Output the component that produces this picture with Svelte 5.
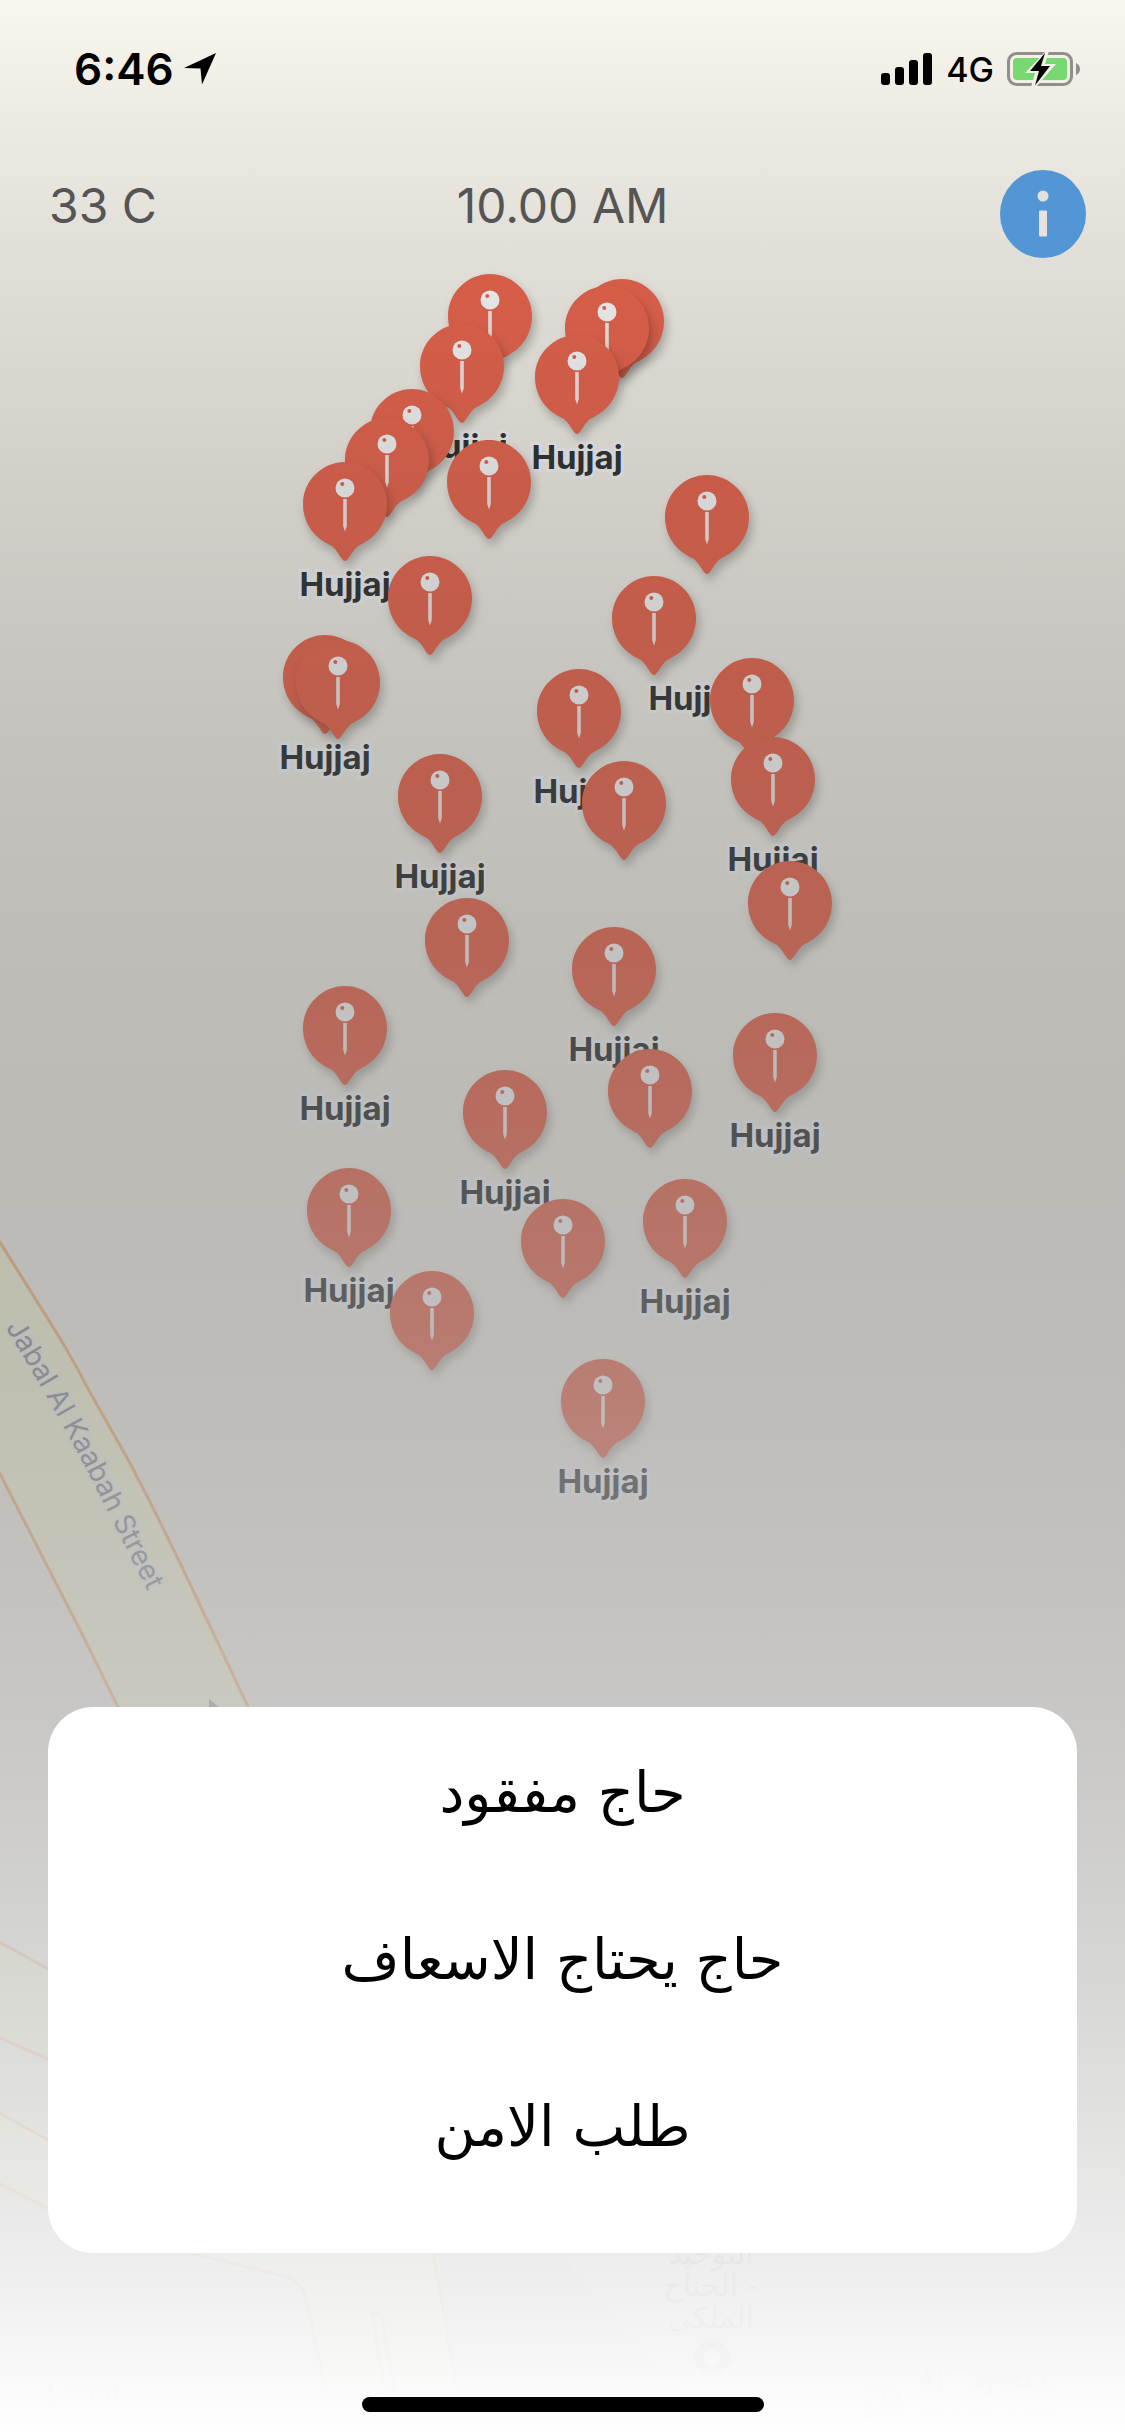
<svelte:options runes={true} />

<script lang="ts">
  type Marker = { x: number; y: number; label?: boolean; side?: boolean };

  // x is the tip of the pin, y its top edge
  // side: the label is pushed right, clear of the pin below it
  const markers: Marker[] = [
    { x: 490, y: 274 },
    { x: 622, y: 279 },
    { x: 607, y: 286 },
    { x: 462, y: 324, label: true },
    { x: 577, y: 335, label: true },
    { x: 412, y: 389 },
    { x: 387, y: 418 },
    { x: 489, y: 440 },
    { x: 345, y: 462, label: true },
    { x: 707, y: 475 },
    { x: 430, y: 556 },
    { x: 654, y: 576, label: true, side: true },
    { x: 325, y: 635, label: true },
    { x: 338, y: 640 },
    { x: 752, y: 658 },
    { x: 579, y: 669, label: true },
    { x: 773, y: 737, label: true },
    { x: 440, y: 754, label: true },
    { x: 624, y: 761 },
    { x: 790, y: 861 },
    { x: 467, y: 898 },
    { x: 614, y: 927, label: true },
    { x: 345, y: 986, label: true },
    { x: 775, y: 1013, label: true },
    { x: 650, y: 1049 },
    { x: 505, y: 1070, label: true },
    { x: 349, y: 1168, label: true },
    { x: 685, y: 1179, label: true },
    { x: 563, y: 1199 },
    { x: 432, y: 1271 },
    { x: 603, y: 1359, label: true },
  ];

  const requests = ["حاج مفقود", "حاج يحتاج الاسعاف", "طلب الامن"];

  // clear black to solid white, without premultiplied alpha
  const steps = 20;
  const fade = Array.from({ length: steps + 1 }, (_, i) => {
    const t = i / steps;
    const c = Math.round(255 * t);
    return `rgba(${c}, ${c}, ${c}, ${t})`;
  }).join(", ");

  let selected = $state("");
</script>

<div class="screen">
  <div class="map">
    <svg class="map__base" width="1125" height="2436" viewBox="0 0 1125 2436">
      <path d="M433 2253L466 2436H720L560 2253Z" fill="#e3e3e3" />
      <g fill="#fdfddc" stroke="#f6b676" stroke-width="3">
        <path d="M-4 1236L53 1327Q70 1354 87 1387L130 1463Q170 1540 207 1620L260 1732H130L118 1707L80 1630L-4 1466Z" />
        <path d="M-4 1940L48 1969L190 2050V2120L48 2059L-4 2036Z" />
        <path d="M-4 2111L48 2140L420 2200L433 2253L466 2440H336L329 2404L305 2295Q300 2280 283 2276L190 2253L48 2208L-4 2182Z" />
        <path d="M372 2313H381L402 2440H392Z" fill="#fafafa" />
      </g>
      <path d="M209 1699L209 1714L228 1714Z" fill="#9c9ea0" />
      <path id="street" d="M5 1327Q40 1384 62 1424T104 1504T150 1596" fill="none" />
      <text class="street"><textPath href="#street">Jabal Al Kaabah Street</textPath></text>
      <g class="poi">
        <text x="711" y="2264">التوحيد</text>
        <text x="711" y="2296">- الجناح</text>
        <text x="711" y="2328">الملكي</text>
        <circle cx="712" cy="2358" r="18" />
        <circle cx="712" cy="2358" r="8" fill="#fff" />
      </g>
      <g class="food">
        <circle cx="882" cy="2405" r="21" />
        <path d="M876 2393v24M888 2393v24M872 2393v8h8v-8" fill="none" stroke="#fff" stroke-width="3" />
        <text x="917" y="2390">Al Tayebat</text>
        <text x="917" y="2425">Restaurant</text>
      </g>
      <text class="legal" x="47" y="2402">Legal</text>
    </svg>

    {#each markers as marker}
      <div class="marker" style:left="{marker.x}px" style:top="{marker.y}px">
        <svg class="marker__pin" width="84" height="100" viewBox="0 0 84 100">
          <path d="M42 0C65 0 84 19 84 42C84 62 72 76 57 83C49 87 46 99 42 99C38 99 35 87 27 83C12 76 0 62 0 42C0 19 19 0 42 0Z" fill="#ee664e" />
          <circle cx="42" cy="26" r="9.5" fill="#fff" />
          <circle cx="39.3" cy="22" r="2" fill="#ee664e" />
          <path d="M40.2 37h3.6v27L42 69.500L40.2 64Z" fill="#fbf0ee" />
        </svg>
        {#if marker.label}
          <span class="marker__label" class:marker__label--side={marker.side}>Hujjaj</span>
        {/if}
      </div>
    {/each}
  </div>

  <div class="fade" style:background-image="linear-gradient({fade})"></div>

  <div class="status">
    <span class="status__time">6:46</span>
    <svg width="32" height="32" viewBox="0 0 32 32"><path d="M32 0L18 31.5L16.500 15.500L0 15Z" /></svg>
    <div class="status__right">
      <svg width="52" height="32" viewBox="0 0 52 32">
        <rect x="0" y="20" width="9" height="12" rx="3" />
        <rect x="14" y="14" width="9" height="18" rx="3" />
        <rect x="28" y="7" width="9" height="25" rx="3" />
        <rect x="42" y="0" width="9" height="32" rx="3" />
      </svg>
      <span class="status__net">4G</span>
      <svg width="74" height="36" viewBox="0 0 74 36">
        <rect x="1.500" y="2.500" width="63" height="31" rx="8" fill="none" stroke="#918f8a" stroke-width="3" />
        <path d="M69 12Q73 14 73 18T69 24Z" fill="#918f8a" />
        <rect x="6" y="7" width="54" height="22" rx="4" fill="#77d872" />
        <path d="M39 0L18 22H28L24 36L29 36L49 13H38L42 0Z" fill="#f2efe8" />
        <path d="M38 2L23 20H32L28 34.500L43 15H34Z" />
      </svg>
    </div>
  </div>

  <header class="header">
    <span class="header__temp">33 C</span>
    <span>10.00 AM</span>
    <button class="header__info" aria-label="Info">
      <svg width="86" height="88" viewBox="0 0 86 88">
        <ellipse cx="43" cy="44" rx="43" ry="44" fill="#5296d6" />
        <circle cx="43" cy="26" r="5.500" fill="#e5e2dc" />
        <rect x="39" y="40.500" width="8" height="26" rx="1" fill="#e5e2dc" />
      </svg>
    </button>
  </header>

  <main class="sheet" dir="rtl" lang="ar">
    {#each requests as request}
      <button class="sheet__item" aria-pressed={selected === request} onclick={() => (selected = request)}>
        {request}
      </button>
    {/each}
  </main>

  <div class="home"></div>
</div>

<style>
  :global(body) {
    background: #fff;
  }

  .screen {
    position: relative;
    display: flex;
    flex-direction: column;
    min-height: 100vh;
    overflow: hidden;
    font-family: Inter, "Liberation Sans", sans-serif;
    color: #000;
  }

  .map,
  .fade {
    position: absolute;
    inset: 0;
    overflow: hidden;
  }

  .map {
    background: #f9f6ee;
  }

  .map__base {
    display: block;
  }

  .marker {
    position: absolute;
    display: flex;
    flex-direction: column;
    align-items: center;
    width: 120px;
    margin-left: -60px;
  }

  .marker__pin {
    filter: drop-shadow(3px 6px 5px rgba(0, 0, 0, 0.25));
  }

  .marker__label {
    margin-top: 4px;
    font-size: 33px;
    font-weight: 700;
    line-height: 36px;
    color: #2e2f2f;
    -webkit-text-stroke: 6px #fafcff;
    paint-order: stroke fill;
  }

  .marker__label--side {
    margin-left: 80px;
  }

  .street {
    font-size: 28px;
    fill: #868789;
    stroke: #f5f6f8;
    stroke-width: 4px;
    paint-order: stroke;
  }

  .poi text {
    direction: rtl;
    font-family: "DejaVu Sans", sans-serif;
    font-size: 30px;
    text-anchor: middle;
  }

  .poi {
    fill: #9a9a9a;
  }

  .food {
    font-size: 28px;
    fill: #e0b080;
  }

  .legal {
    font-size: 28px;
    fill: #999;
    text-decoration: underline;
  }

  .status,
  .header,
  .sheet,
  .home {
    position: relative;
  }

  .status {
    display: flex;
    align-items: center;
    gap: 10px;
    height: 138px;
    padding: 0 44px 0 74px;
  }

  .status__time {
    font-size: 44px;
    font-weight: 600;
  }

  .status__right {
    display: flex;
    align-items: center;
    gap: 13px;
    margin-left: auto;
  }

  .status__net {
    font-size: 34px;
    font-weight: 500;
  }

  .header {
    display: grid;
    grid-template-columns: 1fr auto 1fr;
    padding: 32px 39px 0;
    font-size: 48px;
    line-height: 72px;
    color: #555;
  }

  .header__temp {
    padding-left: 10px;
  }

  .header__info {
    justify-self: end;
    display: flex;
    padding: 0;
    border: none;
    background: none;
    cursor: pointer;
  }

  .sheet {
    display: flex;
    flex-direction: column;
    margin: auto 48px 0;
    padding: 2px 0 43px;
    border-radius: 45px;
    background: #fff;
  }

  .sheet__item {
    height: 167px;
    padding: 0;
    border: none;
    background: none;
    font-family: "DejaVu Sans", sans-serif;
    font-size: 56px;
    color: #000;
    cursor: pointer;
  }

  .home {
    align-self: center;
    width: 402px;
    height: 15px;
    margin: 144px 0 24px;
    border-radius: 8px;
    background: #000;
  }
</style>
